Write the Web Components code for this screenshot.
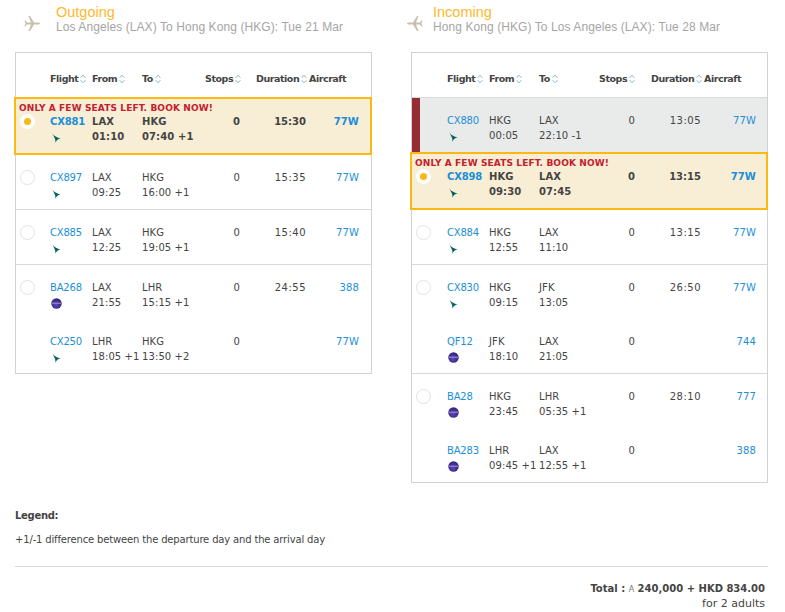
<!DOCTYPE html>
<html>
<head>
<meta charset="utf-8">
<title>Flights</title>
<style>
    html, body { margin: 0; background: #fff; }
</style>
</head>
<body>
<booking-page>
    <flight-panel title="Outgoing" route="Los Angeles (LAX) To Hong Kong (HKG): Tue 21 Mar" cols="34px 42px 50px 63px 51px 53px 50px 12px">
        <flight-group selected alert="ONLY A FEW SEATS LEFT. BOOK NOW!">
            <flight-leg radio checked code="CX881" air="cx" from="LAX" dep="01:10" to="HKG" arr="07:40 +1" dur="15:30" craft="77W"></flight-leg>
        </flight-group>
        <flight-group><flight-leg radio code="CX897" air="cx" from="LAX" dep="09:25" to="HKG" arr="16:00 +1" dur="15:35" craft="77W"></flight-leg></flight-group>
        <flight-group><flight-leg radio code="CX885" air="cx" from="LAX" dep="12:25" to="HKG" arr="19:05 +1" dur="15:40" craft="77W"></flight-leg></flight-group>
        <flight-group>
            <flight-leg radio code="BA268" air="ba" from="LAX" dep="21:55" to="LHR" arr="15:15 +1" dur="24:55" craft="388"></flight-leg>
            <flight-leg code="CX250" air="cx" from="LHR" dep="18:05 +1" to="HKG" arr="13:50 +2" craft="77W"></flight-leg>
        </flight-group>
    </flight-panel>
    <flight-panel incoming title="Incoming" route="Hong Kong (HKG) To Los Angeles (LAX): Tue 28 Mar" cols="35px 42px 50px 60px 52px 53px 52px 11px">
        <flight-group sold><flight-leg code="CX880" air="cx" from="HKG" dep="00:05" to="LAX" arr="22:10 -1" dur="13:05" craft="77W"></flight-leg></flight-group>
        <flight-group selected alert="ONLY A FEW SEATS LEFT. BOOK NOW!">
            <flight-leg radio checked code="CX898" air="cx" from="HKG" dep="09:30" to="LAX" arr="07:45" dur="13:15" craft="77W"></flight-leg>
        </flight-group>
        <flight-group><flight-leg radio code="CX884" air="cx" from="HKG" dep="12:55" to="LAX" arr="11:10" dur="13:15" craft="77W"></flight-leg></flight-group>
        <flight-group>
            <flight-leg radio code="CX830" air="cx" from="HKG" dep="09:15" to="JFK" arr="13:05" dur="26:50" craft="77W"></flight-leg>
            <flight-leg code="QF12" air="ba" from="JFK" dep="18:10" to="LAX" arr="21:05" craft="744"></flight-leg>
        </flight-group>
        <flight-group>
            <flight-leg radio code="BA28" air="ba" from="HKG" dep="23:45" to="LHR" arr="05:35 +1" dur="28:10" craft="777"></flight-leg>
            <flight-leg code="BA283" air="ba" from="LHR" dep="09:45 +1" to="LAX" arr="12:55 +1" craft="388"></flight-leg>
        </flight-group>
    </flight-panel>
    <booking-summary slot="footer"></booking-summary>
</booking-page>
<script>
// page shell, two panels side by side and the footer under them
class BookingPage extends HTMLElement {
    constructor() {
        super();
        this.attachShadow({ mode: 'open' });
        this.shadowRoot.innerHTML = `
            <style>
                :host { display: block; width: 785px; }
                .panels {
                    display: grid;
                    grid-template-columns: 357px 357px;
                    column-gap: 39px;
                    align-items: start;
                    padding-left: 15px;
                }
            </style>
            <div class="panels"><slot></slot></div>
            <slot name="footer"></slot>
        `;
    }
}

class SortLabel extends HTMLElement {
    constructor() {
        super();
        this.attachShadow({ mode: 'open' });
        this.shadowRoot.innerHTML = `
            <style>
                :host { display: inline-flex; align-items: center; gap: 2px; white-space: nowrap; }
                svg { flex: none; }
            </style>
            <slot></slot>
            <svg width="6" height="10" viewBox="0 0 6 10" fill="none" stroke="#8fb4c0" stroke-width="1">
                <path d="M.6 3.8 3 1.2l2.4 2.6M.6 6.2 3 8.8l2.4-2.6"/>
            </svg>
        `;
    }
}

class FlightPanel extends HTMLElement {
    constructor() {
        super();
        this.attachShadow({ mode: 'open' });
    }
    connectedCallback() {
        this.style.setProperty('--cols', this.getAttribute('cols'));
        this.shadowRoot.innerHTML = `
            <style>
                :host { display: block; min-width: 0; }
                .heading {
                    display: flex;
                    align-items: flex-start;
                    height: 52px;
                    padding-top: 4px;
                    box-sizing: border-box;
                    font-family: "Liberation Sans", Arial, sans-serif;
                }
                .plane { flex: none; width: 16px; height: 17px; margin: 11px 16px 0 9px; fill: #c8bfae; }
                :host([incoming]) .plane { margin: 11px 10px 0 -4px; transform: scaleX(-1); }
                h2 { margin: 0; font-size: 14.5px; line-height: 16px; font-weight: 400; color: #fdb92d; }
                p { margin: 0; font-size: 12px; line-height: 14px; letter-spacing: .08px; color: #a5a5a5; white-space: nowrap; }
                .table { border: 1px solid #d2d2d2; }
                .head {
                    display: grid;
                    grid-template-columns: var(--cols);
                    align-items: center;
                    height: 37px;
                    padding-top: 7px;
                    border-bottom: 1px solid #d9d9d9;
                    font: bold 9.5px "DejaVu Sans", Verdana, sans-serif;
                    letter-spacing: -.45px;
                    color: #444;
                }
                .head > :first-child { grid-column: 2; }
            </style>
            <div class="heading">
                <svg class="plane" viewBox="0 0 16 17"><path d="M16 8.5C16 7.8 14.5 7.5 13 7.5H10L6 1H4.5L7 7.5H3L1.5 5.5H.5L1.5 8.5 .5 11.5H1.5L3 9.5H7L4.5 16H6L10 9.5H13C14.5 9.5 16 9.2 16 8.5Z"/></svg>
                <div>
                    <h2>${this.getAttribute('title')}</h2>
                    <p>${this.getAttribute('route')}</p>
                </div>
            </div>
            <div class="table">
                <div class="head">
                    <sort-label>Flight</sort-label>
                    <sort-label>From</sort-label>
                    <sort-label>To</sort-label>
                    <sort-label>Stops</sort-label>
                    <sort-label>Duration</sort-label>
                    <span>Aircraft</span>
                </div>
                <slot></slot>
            </div>
        `;
    }
}

class FlightGroup extends HTMLElement {
    constructor() {
        super();
        this.attachShadow({ mode: 'open' });
    }
    connectedCallback() {
        const alert = this.getAttribute('alert');
        this.shadowRoot.innerHTML = `
            <style>
                :host {
                    display: flex;
                    flex-direction: column;
                    gap: 24px;
                    position: relative;
                    padding: 15px 0 9px;
                    border-bottom: 1px solid #d9d9d9;
                    --dur-spacing: .5px;
                }
                :host(:last-child) { border-bottom: 0; }
                :host([sold]) { background: #e9eaea; border-bottom: 0; }
                :host([sold])::before {
                    content: "";
                    position: absolute;
                    left: 0; top: 0; bottom: 0;
                    width: 8px;
                    background: #962d33;
                }
                :host([selected]) {
                    z-index: 1;
                    gap: 0;
                    margin: 0 -1px 0 -2px;
                    padding: 3px 0 9px;
                    background: #f8eed5;
                    border: 2px solid #fdb813;
                    font-weight: bold;
                    --dur-spacing: 0;
                }
                :host([selected]:first-child) { margin-top: -1px; }
                .alert {
                    padding-left: 3px;
                    font: bold 9px/12px "DejaVu Sans", Verdana, sans-serif;
                    letter-spacing: .12px;
                    color: #c4202e;
                    white-space: nowrap;
                }
            </style>
            ${alert ? `<div class="alert">${alert}</div>` : ''}
            <slot></slot>
        `;
    }
}

class AirlineMark extends HTMLElement {
    constructor() {
        super();
        this.attachShadow({ mode: 'open' });
    }
    connectedCallback() {
        const cx = `<svg width="10" height="11" viewBox="0 0 10 11"><path fill="#00655f" d="M.5 0C2 3 4 5 9.8 6.6 7.5 6.8 6 7.8 4.2 10.8 4.6 9 4.4 7.6 3.6 6 2.8 4.2 1.6 2 .5 0Z"/></svg>`;
        const ba = `<svg width="11" height="11" viewBox="0 0 11 11">
            <defs><radialGradient id="g" cx=".45" cy=".6" r=".7"><stop offset="0" stop-color="#5f48b8"/><stop offset="1" stop-color="#271a72"/></radialGradient></defs>
            <circle cx="5.5" cy="5.5" r="5.2" fill="url(#g)"/><path d="M1 5.2h9" stroke="#a999cf" stroke-width="1"/></svg>`;
        this.shadowRoot.innerHTML = `
            <style>:host { display: block; height: 15px; padding: 3px 0 0 1px; box-sizing: border-box; } svg { display: block; }</style>
            ${this.getAttribute('air') === 'ba' ? ba : cx}
        `;
    }
}

class FlightLeg extends HTMLElement {
    constructor() {
        super();
        this.attachShadow({ mode: 'open' });
    }
    connectedCallback() {
        const get = (n) => this.getAttribute(n) || '';
        this.shadowRoot.innerHTML = `
            <style>
                :host {
                    display: grid;
                    grid-template-columns: var(--cols);
                    font-size: 10px;
                    line-height: 15px;
                    font-family: "DejaVu Sans", Verdana, sans-serif;
                    color: #444;
                    white-space: nowrap;
                    letter-spacing: .1px;
                }
                .radio-cell { padding-left: 4px; }
                .radio {
                    display: flex;
                    align-items: center;
                    justify-content: center;
                    width: 15px;
                    height: 15px;
                    box-sizing: border-box;
                    border: 1px solid #e2e2e2;
                    border-radius: 50%;
                    background: #fff;
                }
                :host([checked]) .radio { border-color: #fff; }
                .dot { width: 7px; height: 7px; border-radius: 50%; background: #fdb813; }
                a { color: #1c8fd8; text-decoration: none; }
                .code { letter-spacing: -.2px; }
                .stops { text-align: right; padding-right: 16px; }
                .dur { text-align: right; padding-right: 3px; letter-spacing: var(--dur-spacing); }
                .craft { text-align: right; }
            </style>
            <div class="radio-cell">${this.hasAttribute('radio') ? `<div class="radio">${this.hasAttribute('checked') ? '<div class="dot"></div>' : ''}</div>` : ''}</div>
            <div><a class="code" href="#">${get('code')}</a><airline-mark air="${get('air')}"></airline-mark></div>
            <div>${get('from')}<br>${get('dep')}</div>
            <div>${get('to')}<br>${get('arr')}</div>
            <div class="stops">0</div>
            <div class="dur">${get('dur')}</div>
            <div class="craft"><a href="#">${get('craft')}</a></div>
        `;
    }
}

class BookingSummary extends HTMLElement {
    constructor() {
        super();
        this.attachShadow({ mode: 'open' });
        this.shadowRoot.innerHTML = `
            <style>
                :host {
                    display: block;
                    margin: 26px 17px 0 15px;
                    font: 10px/14px "DejaVu Sans", Verdana, sans-serif;
                    color: #444;
                }
                .legend { margin: 0 0 10px; font-weight: bold; letter-spacing: -.3px; }
                .note { letter-spacing: -.16px; }
                hr { border: 0; border-top: 1px solid #d9d9d9; margin: 19px 0 15px; }
                .total { text-align: right; padding-right: 3px; }
                .miles { font-size: 8px; font-weight: 400; color: #777; }
                .adults { font-size: 11px; }
            </style>
            <p class="legend">Legend:</p>
            <div class="note">+1/-1 difference between the departure day and the arrival day</div>
            <hr>
            <div class="total"><b>Total : <span class="miles">A</span> 240,000 + HKD 834.00</b><br><span class="adults">for 2 adults</span></div>
        `;
    }
}

customElements.define('booking-page', BookingPage);
customElements.define('sort-label', SortLabel);
customElements.define('flight-panel', FlightPanel);
customElements.define('flight-group', FlightGroup);
customElements.define('airline-mark', AirlineMark);
customElements.define('flight-leg', FlightLeg);
customElements.define('booking-summary', BookingSummary);
</script>
</body>
</html>
